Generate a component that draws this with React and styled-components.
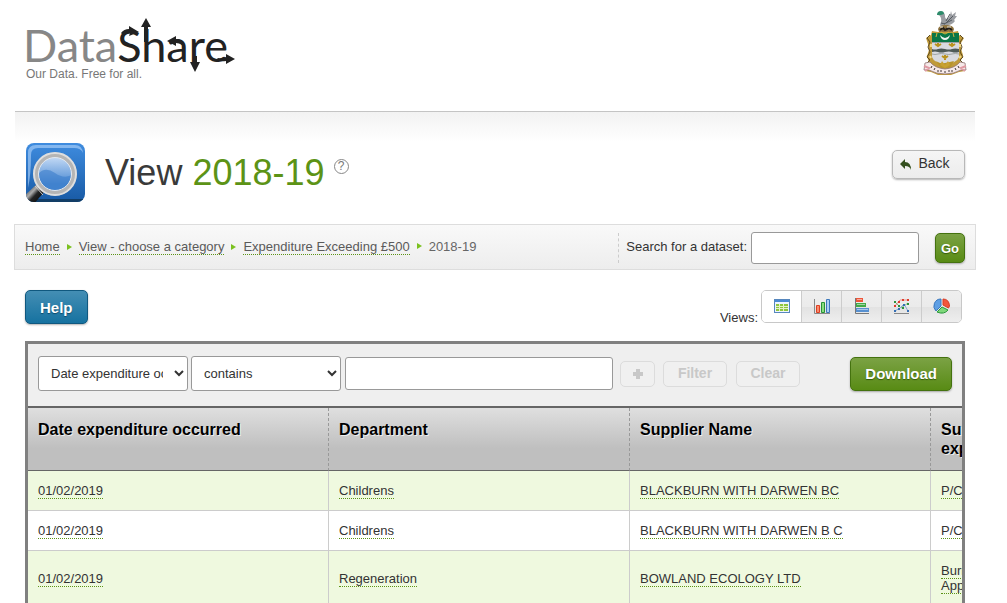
import React from 'react';
import styled, { createGlobalStyle, css } from 'styled-components';

const GlobalStyle = createGlobalStyle`
  *, *::before, *::after { box-sizing: border-box; }
  html { scrollbar-width: none; }
  body {
    margin: 0;
    background: #fff;
    color: #333;
    font: 13px/15px "Liberation Sans", Arial, Helvetica, sans-serif;
  }
  button, input, select { font: inherit; color: inherit; margin: 0; }
`;

const Page = styled.div`
  padding: 0 32px 0 15px;
  overflow: hidden;
`;

const Header = styled.header`
  display: flex;
  justify-content: space-between;
  align-items: flex-start;
  height: 111px;
  padding: 10px 8px 0 10px;
`;

const Brand = styled.a`
  position: relative;
  display: block;
  padding-top: 11px;
  color: #777;
  text-decoration: none;
`;

const Wordmark = styled.span`
  display: flex;
  align-items: baseline;
  margin-left: -2px;
  color: #878787;
  font: 400 45px/48px Lato, "Open Sans", sans-serif;

  strong { color: #222; font-weight: 400; }
`;

const BrandArrows = styled.svg`
  position: absolute;
  left: 0;
  top: 0;
`;

const Tagline = styled.span`
  display: block;
  padding-left: 1px;
  font-size: 12px;
  line-height: 10px;
`;

const TitleBar = styled.section`
  display: flex;
  align-items: flex-start;
  height: 113px;
  padding: 31px 10px 0 11px;
  border-top: 1px solid #c4c4c4;
  background: linear-gradient(#f2f2f2, #fff 30px);
`;

const Title = styled.h1`
  margin: 10px 0 0 20px;
  color: #3a3a3a;
  font-size: 36px;
  font-weight: 400;
  line-height: 40px;

  span { color: #5c9316; }
`;

const HintLink = styled.a`
  display: flex;
  align-items: center;
  justify-content: center;
  width: 15px;
  height: 15px;
  margin: 16px 0 0 9px;
  border: 1px solid #888;
  border-radius: 50%;
  color: #777;
  font-size: 12px;
  line-height: 13px;
  text-decoration: none;
`;

const tones = {
  light: css`
    border-color: #b8b8b8;
    background: linear-gradient(#f5f5f5, #ececec);
    color: #333;
  `,
  green: css`
    border-color: #44720f;
    background: linear-gradient(#7ba244, #588b14);
    color: #fff;
    text-shadow: 0 1px 1px #345a08;
  `,
  blue: css`
    border-color: #10587f;
    background: linear-gradient(#448eb4, #1672a0);
    color: #fff;
    text-shadow: 0 1px 1px #0b4a6c;
  `,
};

const Button = styled.button`
  display: inline-flex;
  align-items: center;
  justify-content: center;
  flex: none;
  height: ${(p) => p.$height || 34}px;
  padding: 0 ${(p) => (p.$pad === undefined ? 14 : p.$pad)}px;
  border: 1px solid;
  border-radius: 5px;
  box-shadow: 0 1px 2px rgba(0, 0, 0, 0.3);
  font-size: ${(p) => p.$size || 15}px;
  font-weight: bold;
  white-space: nowrap;
  ${(p) => tones[p.$tone]}
`;

const BackButton = styled(Button)`
  gap: 6px;
  width: 73px;
  margin: 7px 0 0 auto;
  padding: 0 7px 2px 0;
  font-size: 14px;
  font-weight: 400;
`;

const Strip = styled.div`
  display: flex;
  align-items: center;
  justify-content: space-between;
  height: 46px;
  margin: 0 -1px;
  padding: 2px 10px 0;
  border: 1px solid #ddd;
  background: linear-gradient(#f9f9f9, #ededed);
`;

const Crumbs = styled.ol`
  display: flex;
  align-items: baseline;
  margin: 0;
  padding: 0 0 3px;
  list-style: none;
  color: #666;
  white-space: nowrap;

  li { display: flex; align-items: baseline; }
  li + li::before {
    content: "";
    align-self: center;
    margin: 0 7px;
    border: solid transparent;
    border-width: 3px 0 3px 5px;
    border-left-color: #7bc11f;
  }
`;

const DottedLink = styled.a`
  border-bottom: 1px dotted #5c9316;
  color: ${(p) => (p.$muted ? '#5a5a5a' : '#333')};
  text-decoration: none;
`;

const SearchForm = styled.form`
  display: flex;
  align-items: center;

  label {
    padding: 7px 4px 9px 7px;
    border-left: 1px dashed #ccc;
    line-height: 14px;
  }
  button { width: 30px; margin-left: 16px; }
`;

const TextInput = styled.input`
  width: ${(p) => p.$width}px;
  min-width: 60px;
  height: ${(p) => p.$height}px;
  padding: 0 8px;
  border: 1px solid #999;
  border-radius: 3px;
  background: #fff;
`;

const Actions = styled.div`
  display: flex;
  justify-content: space-between;
  align-items: flex-start;
  padding: 20px 13px 17px 10px;
`;

const Views = styled.div`
  display: flex;
  align-items: flex-end;
  gap: 3px;

  > span { line-height: 11px; }
`;

const ViewTabs = styled.div`
  display: flex;
  height: 33px;
  border: 1px solid #c8c8c8;
  border-radius: 5px;
  overflow: hidden;
`;

const ViewTab = styled.button`
  display: flex;
  align-items: center;
  justify-content: center;
  width: ${(p) => (p.$active ? 39 : 40)}px;
  padding: 0;
  border: 0;
  border-left: ${(p) => (p.$active ? 0 : 1)}px solid #ccc;
  background: ${(p) => (p.$active ? '#fff' : 'linear-gradient(#eee, #ebebeb 50%, #e2e2e2 51%, #eee)')};
`;

const Frame = styled.section`
  margin: 0 10px;
  border: 3px solid #808080;
  overflow: hidden;
`;

const FilterBar = styled.form`
  display: flex;
  align-items: center;
  height: 62px;
  padding: 0 10px 3px;
  background: #efefef;

  ${Button} { margin-left: auto; }
`;

const Select = styled.select`
  width: 150px;
  height: 35px;
  margin-right: ${(p) => p.$gap}px;
  padding: 0 8px;
  border: 1px solid #999;
  border-radius: 3px;
  background: #fff;
`;

const GhostButton = styled.button`
  display: flex;
  align-items: center;
  justify-content: center;
  flex: none;
  width: ${(p) => p.$width || 64}px;
  height: 26px;
  margin-left: ${(p) => p.$gap || 8}px;
  padding: 0;
  border: 1px solid #dcdcdc;
  border-radius: 5px;
  background: #f0f0f0;
  && { color: #c8c8c8; font-size: 14px; font-weight: bold; }
`;

const Table = styled.table`
  width: 1204px;
  table-layout: fixed;
  border-collapse: separate;
  border-spacing: 0;
  border-top: 2px solid #666;
`;

const HeadCell = styled.th`
  height: 63px;
  padding: 12px 10px;
  border-right: 1px dashed #999;
  border-bottom: 1px solid #666;
  background: linear-gradient(#dfdfdf, #bfbfbf 65%);
  color: #000;
  font-size: 16px;
  line-height: 19px;
  text-align: left;
  text-shadow: 1px 1px 0 #eee;
  vertical-align: top;
`;

const Row = styled.tr`
  background: ${(p) => (p.$odd ? '#eff9df' : '#fff')};
`;

const Cell = styled.td`
  padding: 12px 10px;
  border-right: 1px solid #ccc;
  border-bottom: 1px solid #ccc;
  vertical-align: middle;
`;

const Crest = () => (
  <svg width="44" height="65" viewBox="0 0 44 65" role="img" aria-label="Borough crest">
    <path d="M17 15q2-4 1-7q-1-3-3-3q-1-3 3-3q4 0 4 4q0 3 2 3q3-1 4-8l1 4l4-3l-1 4l2 0l-3 4l1 1q-3 4-7 4l1 2h-8z" fill="#9a9da2" />
    <path d="M14 5q0-4 4-4q3 0 3 3l-3 1z" fill="#2d8b6b" />
    <path d="M23 11l4-7M23 13l7-7M21 14l8-4M18 13l4 1" stroke="#555a60" fill="none" />
    <path d="M15 19q1-4 8-4t8 4l-1 3H16z" fill="#8f7440" />
    <path d="M17 20l3-2l2 2l4-2l3 2" stroke="#241e18" strokeWidth="2" fill="none" />
    <path d="M17 17h3M24 17h4" stroke="#f0ece0" />
    <path d="M9 21l6 1h15l5-1l1 4l5 3l-3 5l0 6l2 6l-3 8l5 3v5l-6 1l-8 3H15l-7-3l-6-1v-5l4-3l-2-7l2-6l-1-6l-2-6l5-3z" fill="#c09a3a" />
    <path d="M7 25l-3 3l3 4l-2 5l2 5l-3 5l3 3l-4 4M37 25l3 3l-3 4l2 5l-2 5l3 5l-3 3l4 4" stroke="#5f4c20" fill="none" />
    <path d="M8 34v3M7 46l1 2M37 34v3M38 46l-2 2" stroke="#f3d984" fill="none" strokeWidth="2" />
    <path d="M9 32h27v15q-2 6-14 7q-11-1-13-7z" fill="#d8dae0" />
    <path d="M9 23h27v9H9z" fill="#0a7748" />
    <path d="M17 25q5 6 10 0q-1 5-5 5t-5-5" fill="#f1f5f2" />
    <path d="M14 23l-1 4M30 23l1 4M18 22l4 2l4-2" stroke="#d2b540" fill="none" />
    <path d="M9 39q3 1 6 0t7 0t7 0t7 0v3q-4 1-7 0t-7 0t-7 0t-6 0z" fill="#4e5a58" />
    <path d="M9 32.500h27M9 44q3 1 6 0t7 0t7 0t7 0" fill="none" stroke="#9ea4a5" />
    <path d="M15 33v4m-3-3l3 2l3-2M29 33v4m-3-3l3 2l3-2M22 45v5m-3-4l3 2l3-2" stroke="#b9921d" strokeWidth="2" fill="none" />
    <path d="M13 51q4 3 9 2t9-2l-4 7h-9z" fill="#b8942c" />
    <path d="M2 53l5-1q5 6 15 7q10-1 15-7l5 1l1 7l-5 0q-7 4-16 4T6 60l-5 0z" fill="#f6e9e9" stroke="#8f7474" strokeWidth=".8" />
    <path d="M1 56l5 2l-4 3M43 56l-5 2l4 3" stroke="#df9aa3" fill="none" strokeWidth="2" />
    <path d="M9 56l-1 2M12 58l-1 2M15 60v2M18 60v2M22 61v2M26 60v2M29 60v2M32 58l1 2M35 56l1 2" stroke="#3f3636" />
    <path d="M19 51l3 4l3-4l2 4l-5 3l-5-3z" fill="#c8a132" />
  </svg>
);

const LensIcon = () => (
  <svg width="59" height="59" viewBox="0 0 59 59" role="img" aria-label="View">
    <defs>
      <linearGradient id="tile" x2="0" y2="1"><stop stopColor="#3f8cdf" /><stop offset="1" stopColor="#185aa5" /></linearGradient>
      <linearGradient id="glass" x2="0" y2="1"><stop stopColor="#c4daf5" /><stop offset=".8" stopColor="#4a89d2" /></linearGradient>
      <linearGradient id="grip" x2="1" y2="1"><stop stopColor="#111" /><stop offset=".4" stopColor="#aaa" /><stop offset=".55" stopColor="#222" /><stop offset="1" stopColor="#000" /></linearGradient>
      <clipPath id="tileClip"><rect width="59" height="59" rx="8" /></clipPath>
    </defs>
    <g clipPath="url(#tileClip)">
      <rect width="59" height="59" fill="url(#tile)" />
      <path d="M2 45V10q0-8 8-8h39q7 0 8 8q-2-5-9-5H12q-7 0-7 7q0 20-3 33z" fill="#a9d0fa" opacity=".65" />
      <path d="M0 56h59v3H0z" fill="#123d66" />
      <path d="M-2 53L11 41l7 8L7 62z" fill="url(#grip)" />
      <path d="M9 43l8 9" stroke="#ccc" strokeWidth="1" />
      <circle cx="29" cy="31" r="17" fill="url(#glass)" />
      <path d="M12 31q7-8 17-1t18 1q-1 16-18 17Q12 46 12 31" fill="#3a7dcb" opacity=".6" />
      <circle cx="29" cy="31" r="19" fill="none" stroke="#b5b5b5" strokeWidth="5" />
      <circle cx="29" cy="31" r="21" fill="none" stroke="#dedede" strokeWidth="2" />
      <circle cx="29" cy="31" r="16.500" fill="none" stroke="#e4e9ef" strokeWidth="1" />
    </g>
  </svg>
);

const viewIcons = {
  'Table view': (
    <>
      <rect x="1.500" y="1.500" width="15" height="13" fill="#eef5ff" stroke="#5787bd" />
      <path d="M2 3h14" stroke="#4a8ad4" strokeWidth="2" />
      <path d="M3 6h12v7H3z" fill="#8fc63d" />
      <path d="M3 8.500h12M3 10.500h12M6.500 6v7M10.500 6v7" stroke="#e4f3c7" />
    </>
  ),
  'Column chart': (
    <>
      <path d="M1.500 1v14.500H17" stroke="#888" fill="none" />
      <path d="M3.500 7.500h3v7h-3z" fill="#fa8a6c" stroke="#dd3f22" />
      <path d="M8.500 4.500h3v10h-3z" fill="#8adc80" stroke="#269335" />
      <path d="M13.500 1.500h3v13h-3z" fill="#a9cdf5" stroke="#3d78bb" />
    </>
  ),
  'Bar chart': (
    <>
      <path d="M2.500 0v15.500H16" stroke="#777" fill="none" />
      <path d="M3 0h7v4H3z" fill="#ee5539" />
      <path d="M3 5h10v4H3z" fill="#42aa48" />
      <path d="M3 10h13v4H3z" fill="#5790d0" />
      <path d="M4 1.500h5M4 6.500h8M4 11.500h11" stroke="#fff" opacity=".5" />
    </>
  ),
  'Line chart': (
    <>
      <path d="M1 15.500h15" stroke="#888" />
      <path d="M2 8l5-6h9" stroke="#e9958a" fill="none" />
      <path d="M2 4l6 6l7-5" stroke="#83b887" fill="none" />
      <path d="M2 13l5-3l4-4l4 7" stroke="#86a9d4" fill="none" />
      <path d="M1 7h2v2H1zM5 3h2v2H5zM9 1h2v2H9zM14 1h2v2h-2z" fill="#df3c2c" />
      <path d="M1 3h2v2H1zM5 7h2v2H5zM9 9h2v2H9zM14 5h2v2h-2z" fill="#2c933c" />
      <path d="M1 12h2v2H1zM5 10h2v2H5zM10 6h2v2h-2zM14 12h2v2h-2z" fill="#356fb4" />
    </>
  ),
  'Pie chart': (
    <>
      <path d="M8 8V1a7 7 0 0 0-5 12z" fill="#5f9fe4" stroke="#3a78bd" />
      <path d="M10 7V1q6 0 6.500 7l-1 2z" fill="#f2563b" stroke="#d63b25" />
      <path d="M9 9l6 3q-4 5-11 2z" fill="#7fd87a" stroke="#28963a" />
    </>
  ),
};

const columns = [
  'Date expenditure occurred',
  'Department',
  'Supplier Name',
  <>Summary of<br />expenditure</>,
];
const rows = [
  ['01/02/2019', 'Childrens', 'BLACKBURN WITH DARWEN BC', 'P/Carers'],
  ['01/02/2019', 'Childrens', 'BLACKBURN WITH DARWEN B C', 'P/Carers'],
  ['01/02/2019', 'Regeneration', 'BOWLAND ECOLOGY LTD', <>Burnley<br />Approach</>],
];

export default function App() {
  return (
    <>
      <GlobalStyle />
      <Page>
        <Header>
          <Brand href="#home">
            <Wordmark>Data<strong>Share</strong></Wordmark>
            <BrandArrows width="212" height="66" viewBox="0 0 212 66" fill="#222" aria-hidden="true">
              <path d="M121 8l5 9h-3v15h-4V17h-3z" />
              <path d="M104 16l10 6l-10 4l1-3q-4 0-7 2l-2-2q3-4 8-4z" />
              <path d="M142 31l9-5v3q5 0 8 4l-2 2q-3-2-6-2v3z" />
              <path d="M168 46h4v6h3l-5 10l-5-10h3z" />
              <path d="M201 44l9 5l-9 5v-3q-6 1-10-1l2-2q4 1 8-1z" />
            </BrandArrows>
            <Tagline>Our Data. Free for all.</Tagline>
          </Brand>
          <Crest />
        </Header>

        <TitleBar>
          <LensIcon />
          <Title>View <span>2018-19</span></Title>
          <HintLink href="#about">?</HintLink>
          <BackButton type="button" $tone="light" $height={29}>
            <svg width="12" height="12" viewBox="0 0 12 12" aria-hidden="true">
              <path d="M0 6l5-5v3q6 0 6 8q-1-4-6-4v3z" fill="#34501f" />
            </svg>
            Back
          </BackButton>
        </TitleBar>

        <Strip>
          <Crumbs>
            <li><DottedLink $muted href="#home">Home</DottedLink></li>
            <li><DottedLink $muted href="#view">View - choose a category</DottedLink></li>
            <li><DottedLink $muted href="#expenditure">Expenditure Exceeding £500</DottedLink></li>
            <li>2018-19</li>
          </Crumbs>
          <SearchForm>
            <label htmlFor="search">Search for a dataset:</label>
            <TextInput id="search" $width={168} $height={32} />
            <Button type="button" $tone="green" $height={30} $pad={0} $size={13}>Go</Button>
          </SearchForm>
        </Strip>

        <Actions>
          <Button type="button" $tone="blue">Help</Button>
          <Views>
            <span>Views:</span>
            <ViewTabs>
              {Object.entries(viewIcons).map(([name, drawing], i) => (
                <ViewTab key={name} type="button" aria-label={name} $active={i === 0}>
                  <svg width="18" height="17" viewBox="0 0 18 17" aria-hidden="true">{drawing}</svg>
                </ViewTab>
              ))}
            </ViewTabs>
          </Views>
        </Actions>

        <Frame>
          <FilterBar>
            <Select aria-label="Column" $gap={3}><option>Date expenditure occurred</option></Select>
            <Select aria-label="Condition" $gap={4}><option>contains</option></Select>
            <TextInput aria-label="Value" $width={268} $height={33} />
            <GhostButton type="button" aria-label="Add condition" disabled $width={35} $gap={7}>
              <svg width="10" height="10" viewBox="0 0 10 10" aria-hidden="true">
                <path d="M3 0h4v3h3v4H7v3H3V7H0V3h3z" fill="#c8c8c8" />
              </svg>
            </GhostButton>
            <GhostButton type="button" disabled>Filter</GhostButton>
            <GhostButton type="button" disabled $gap={9}>Clear</GhostButton>
            <Button type="button" $tone="green">Download</Button>
          </FilterBar>
          <Table>
            <thead>
              <tr>{columns.map((name, c) => <HeadCell key={c} scope="col">{name}</HeadCell>)}</tr>
            </thead>
            <tbody>
              {rows.map((cells, r) => (
                <Row key={r} $odd={r % 2 === 0}>
                  {cells.map((value, c) => (
                    <Cell key={c}><DottedLink href="#record">{value}</DottedLink></Cell>
                  ))}
                </Row>
              ))}
            </tbody>
          </Table>
        </Frame>
      </Page>
    </>
  );
}
